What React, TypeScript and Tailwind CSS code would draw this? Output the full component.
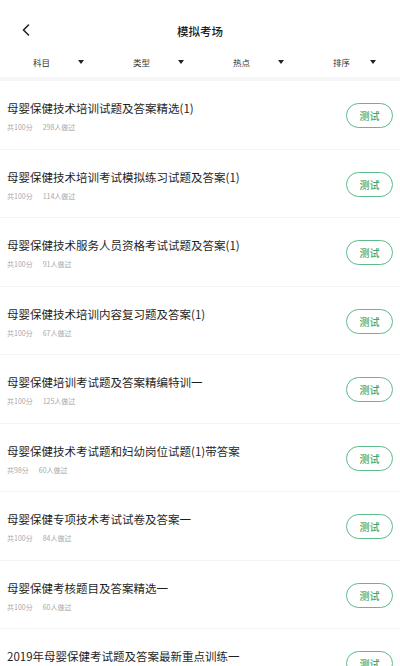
import React from 'react';

interface Exam {
  title: string;
  score: number;
  done: number;
}

const exams: Exam[] = [
  { title: '母婴保健技术培训试题及答案精选(1)', score: 100, done: 298 },
  { title: '母婴保健技术培训考试模拟练习试题及答案(1)', score: 100, done: 114 },
  { title: '母婴保健技术服务人员资格考试试题及答案(1)', score: 100, done: 91 },
  { title: '母婴保健技术培训内容复习题及答案(1)', score: 100, done: 67 },
  { title: '母婴保健培训考试题及答案精编特训一', score: 100, done: 125 },
  { title: '母婴保健技术考试题和妇幼岗位试题(1)带答案', score: 98, done: 60 },
  { title: '母婴保健专项技术考试试卷及答案一', score: 100, done: 84 },
  { title: '母婴保健考核题目及答案精选一', score: 100, done: 60 },
  { title: '2019年母婴保健考试题及答案最新重点训练一', score: 100, done: 52 },
];

// label + gap before the dropdown arrow (last column sits a bit tighter)
const filters = [
  { label: '科目', gap: 'ml-[28px]' },
  { label: '类型', gap: 'ml-[28px]' },
  { label: '热点', gap: 'ml-[28px]' },
  { label: '排序', gap: 'ml-[20px]' },
];

export default function App() {
  return (
    <div
      className="w-[400px] min-h-[666px] bg-white text-[#222]"
      style={{ fontFamily: '"Noto Sans CJK SC", "Noto Sans", sans-serif' }}
    >
      {/* top bar */}
      <div className="relative h-[46px] pt-[16px] flex items-center justify-center">
        <button className="absolute left-[22px] top-[23px] w-[10px] h-[14px] flex items-center" aria-label="back">
          <svg width="8" height="12" viewBox="0 0 8 12" fill="none">
            <path d="M6.5 1L1.5 6L6.5 11" stroke="#222" strokeWidth="1.6" strokeLinecap="round" strokeLinejoin="round" />
          </svg>
        </button>
        <span className="text-[11.5px] font-medium leading-[16px] text-[#1a1a1a]">模拟考场</span>
      </div>

      {/* filter row */}
      <div className="grid grid-cols-4 h-[31px]">
        {filters.map((f) => (
          <div key={f.label} className="flex items-center pl-[33px]">
            <span className="text-[8.5px] leading-[10px] text-[#333]">{f.label}</span>
            <span
              className={`${f.gap} w-0 h-0 border-l-[3.5px] border-r-[3.5px] border-t-[4px] border-l-transparent border-r-transparent border-t-[#222]`}
            />
          </div>
        ))}
      </div>

      <div className="h-[4px] bg-[#f6f6f6]" />

      {/* exam list */}
      <div>
        {exams.map((e) => (
          <div key={e.title} className="h-[68.5px] border-b border-[#f3f3f3] flex items-start justify-between pl-[7px] pr-[7px]">
            <div className="pt-[19px]">
              <div className="text-[11.5px] leading-[16px] text-[#1f1f1f] whitespace-nowrap">{e.title}</div>
              <div className="mt-[6px] flex text-[7px] leading-[10px] text-[#a8a8a8]">
                <span>共{e.score}分</span>
                <span className="ml-[10px]">{e.done}人做过</span>
              </div>
            </div>
            <button className="mt-[22px] w-[47px] h-[25px] rounded-full border border-[#5bbb8a] text-[#3ea96e] text-[10px] font-medium flex items-center justify-center shrink-0">
              测试
            </button>
          </div>
        ))}
      </div>
    </div>
  );
}
